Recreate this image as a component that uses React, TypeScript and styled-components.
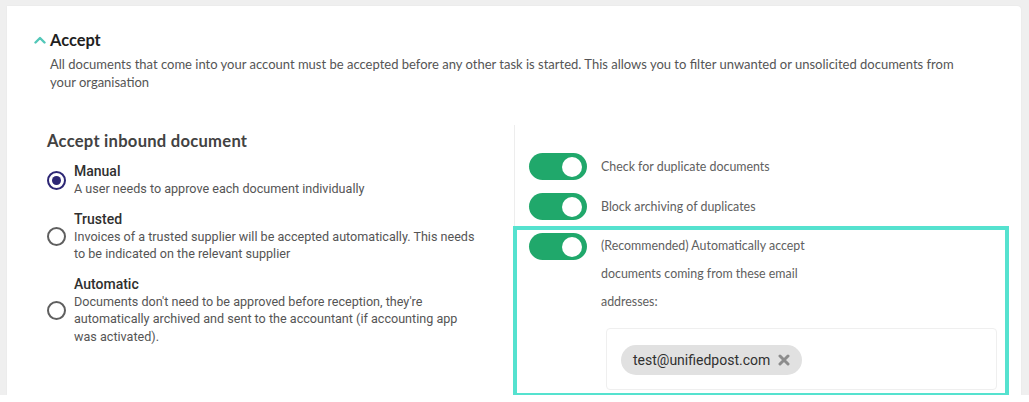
import React from 'react';
import styled, { createGlobalStyle } from 'styled-components';

const GlobalStyle = createGlobalStyle`
	html, body {
		margin: 0;
		padding: 0;
		background: #ffffff;
	}
	body {
		font-family: 'Lato', 'Noto Sans', sans-serif;
		-webkit-font-smoothing: antialiased;
	}
`;

const OPTIONS = [
	{
		id: 'manual',
		title: 'Manual',
		copy: 'A user needs to approve each document individually',
		checked: true,
	},
	{
		id: 'trusted',
		title: 'Trusted',
		copy: 'Invoices of a trusted supplier will be accepted automatically. This needs to be indicated on the relevant supplier',
		checked: false,
	},
	{
		id: 'automatic',
		title: 'Automatic',
		copy: "Documents don't need to be approved before reception, they're automatically archived and sent to the accountant (if accounting app was activated).",
		checked: false,
	},
];

const Chevron = () => (
	<svg width="12" height="8" viewBox="0 0 12 8">
		<polyline points="1.5,6.5 6,2 10.5,6.5" fill="none" stroke="#52c7b8" strokeWidth="2.4" strokeLinecap="round" strokeLinejoin="round" />
	</svg>
);

const RemoveIcon = () => (
	<svg width="12" height="12" viewBox="0 0 12 12">
		<path d="M2 2 L10 10 M10 2 L2 10" stroke="#8c8c8c" strokeWidth="3" strokeLinecap="round" />
	</svg>
);

const App = () => (
	<>
		<GlobalStyle />
		<Frame>
			<Card>
				<Header>
					<Chevron />
					<Title>Accept</Title>
				</Header>
				<Description>
					All documents that come into your account must be accepted before any other task is started. This allows you to
					filter unwanted or unsolicited documents from your organisation
				</Description>
				<Columns>
					<LeftColumn>
						<SubTitle>Accept inbound document</SubTitle>
						<OptionList>
							{OPTIONS.map(({ id, title, copy, checked }) => (
								<Option key={id}>
									<Radio checked={checked} />
									<OptionText>
										<OptionTitle>{title}</OptionTitle>
										<OptionCopy>{copy}</OptionCopy>
									</OptionText>
								</Option>
							))}
						</OptionList>
					</LeftColumn>
					<RightColumn>
						<ToggleRow>
							<Toggle />
							<ToggleLabel>Check for duplicate documents</ToggleLabel>
						</ToggleRow>
						<ToggleRow>
							<Toggle />
							<ToggleLabel>Block archiving of duplicates</ToggleLabel>
						</ToggleRow>
						<Highlight>
							<ToggleRow inset>
								<Toggle />
								<ToggleLabel narrow>(Recommended) Automatically accept documents coming from these email addresses:</ToggleLabel>
							</ToggleRow>
							<EmailField>
								<Chip>
									<ChipText>test@unifiedpost.com</ChipText>
									<RemoveIcon />
								</Chip>
							</EmailField>
						</Highlight>
					</RightColumn>
				</Columns>
			</Card>
		</Frame>
	</>
);

const Frame = styled.div`
	background: #efefef;
	padding: 6px 8px 0 7px;
	height: 395px;
	box-sizing: border-box;
`;

const Card = styled.div`
	background: #ffffff;
	height: 100%;
	border-radius: 0 4px 0 0;
	box-shadow: 0 0 2px rgba(0, 0, 0, 0.06);
	padding-top: 24px;
	box-sizing: border-box;
`;

const Header = styled.div`
	display: flex;
	align-items: center;
	gap: 4px;
	padding-left: 27px;
`;

const Title = styled.h2`
	margin: 0;
	font-size: 16.4px;
	line-height: 20px;
	font-weight: 700;
	color: #1f1f1f;
`;

const Description = styled.p`
	margin: 5px 46px 0 43px;
	font-size: 13px;
	line-height: 18px;
	color: #555555;
`;

const Columns = styled.div`
	display: grid;
	grid-template-columns: 507px 1fr;
	margin-top: 34px;
`;

const LeftColumn = styled.div`
	padding: 6px 32px 0 40px;
`;

const SubTitle = styled.h3`
	margin: 0;
	font-size: 16.6px;
	line-height: 20px;
	font-weight: 700;
	letter-spacing: 0.25px;
	color: #424242;
`;

const OptionList = styled.div`
	display: flex;
	flex-direction: column;
	gap: 13px;
	margin-top: 12px;
`;

const Option = styled.label`
	display: flex;
	align-items: center;
	gap: 8px;
	font-family: 'Roboto', 'Noto Sans', sans-serif;
`;

const Radio = styled.span<{ checked: boolean }>`
	flex: none;
	position: relative;
	width: 19px;
	height: 19px;
	border-radius: 50%;
	box-sizing: border-box;
	border: 2px solid ${({ checked }) => (checked ? '#2d2775' : '#5f5f5f')};
	&::after {
		content: '';
		display: ${({ checked }) => (checked ? 'block' : 'none')};
		position: absolute;
		inset: 3px;
		border-radius: 50%;
		background: #2d2775;
	}
`;

const OptionText = styled.div`
	display: flex;
	flex-direction: column;
`;

const OptionTitle = styled.span`
	font-size: 14px;
	line-height: 17px;
	font-weight: 500;
	color: #2f2f2f;
`;

const OptionCopy = styled.span`
	font-size: 12.6px;
	line-height: 17.5px;
	color: #555555;
`;

const RightColumn = styled.div`
	border-left: 1px solid #ededed;
	padding: 28px 0 0 0;
	display: flex;
	flex-direction: column;
	gap: 13px;
`;

const ToggleRow = styled.div<{ inset?: boolean }>`
	display: flex;
	align-items: flex-start;
	gap: 14px;
	padding-left: ${({ inset }) => (inset ? '12px' : '14px')};
`;

const Toggle = styled.span`
	flex: none;
	position: relative;
	width: 58px;
	height: 27px;
	border-radius: 14px;
	background: #20a86b;
	&::after {
		content: '';
		position: absolute;
		top: 3.5px;
		right: 5px;
		width: 20px;
		height: 20px;
		border-radius: 50%;
		background: #ffffff;
	}
`;

const ToggleLabel = styled.span<{ narrow?: boolean }>`
	font-size: 12.4px;
	line-height: 27px;
	color: #606060;
	max-width: ${({ narrow }) => (narrow ? '212px' : 'none')};
	${({ narrow }) => narrow && 'line-height: 28px; margin-top: -1px;'}
`;

const Highlight = styled.div`
	margin: -7px 12px 0 -2px;
	border: 4px solid #55e2cf;
	padding-top: 3px;
	position: relative;
	height: 171px;
	box-sizing: border-box;
`;

const EmailField = styled.div`
	margin: 12px 8px 0 89px;
	height: 62px;
	box-sizing: border-box;
	border: 1px solid #efefef;
	border-radius: 4px;
	padding: 16px 14px;
`;

const Chip = styled.span`
	display: inline-flex;
	align-items: center;
	gap: 8px;
	height: 30px;
	padding: 0 12px;
	border-radius: 15px;
	background: #e1e1e1;
	box-sizing: border-box;
`;

const ChipText = styled.span`
	font-family: 'Roboto', 'Noto Sans', sans-serif;
	font-size: 14px;
	color: #303030;
`;

export default App;
